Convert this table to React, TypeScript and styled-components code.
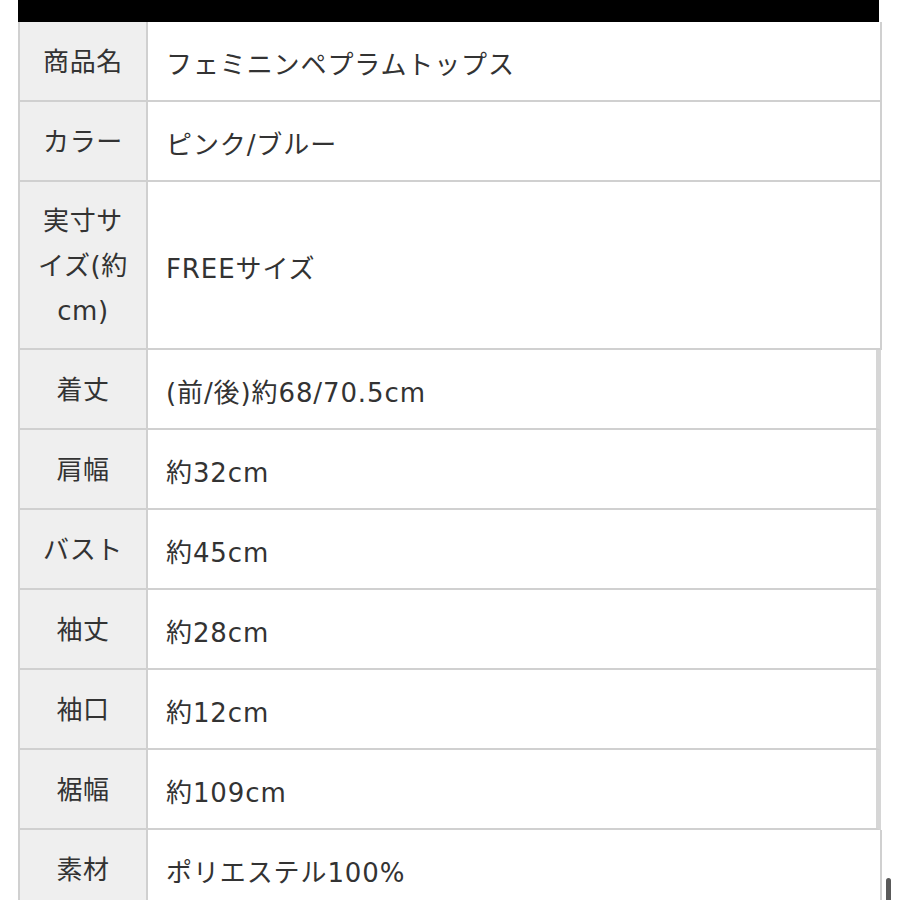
import React from "react";
import styled, { createGlobalStyle } from "styled-components";

const Global = createGlobalStyle`
  html, body { margin: 0; padding: 0; background: #ffffff; }
  body { overflow: hidden; }
`;

const Page = styled.div`
  position: relative;
  width: 900px;
  height: 900px;
  overflow: hidden;
  background: #fff;
  padding-left: 18px;
  box-sizing: border-box;
  font-family: "DejaVu Sans", "Noto Sans CJK JP", sans-serif;
  color: #333333;
`;

const Wrap = styled.div`
  width: 864px;
`;

const TopBar = styled.div`
  height: 22px;
  width: 861px;
  background: #000;
`;

const Table = styled.div`
  display: flex;
  flex-direction: column;
`;

const Row = styled.div<{ $h: number; $thick?: boolean }>`
  display: grid;
  grid-template-columns: 128px 1fr;
  height: ${(p) => p.$h}px;
  border-left: 2px solid #d0d0d0;
  border-bottom: 2px solid #d0d0d0;
  border-right: ${(p) => (p.$thick ? "5px solid #d6d6d6" : "2px solid #d0d0d0")};
  width: ${(p) => (p.$thick ? "863px" : "864px")};
  box-sizing: border-box;
`;

const Label = styled.div`
  background: #efefef;
  border-right: 2px solid #d0d0d0;
  display: flex;
  align-items: center;
  justify-content: center;
  text-align: center;
  padding: 2px 14px 0;
  font-size: 26px;
  line-height: 45px;
  letter-spacing: 0.6px;
  word-break: break-all;
`;

const Value = styled.div`
  display: flex;
  align-items: center;
  padding: 2px 0 0 18px;
  font-size: 26px;
  letter-spacing: 0.9px;
  background: #fff;
`;

const Thumb = styled.div`
  position: absolute;
  left: 886px;
  top: 878px;
  width: 5px;
  height: 30px;
  border-radius: 3px;
  background: #5a5a5a;
`;

const rows: { label: string; value: string; h: number; thick?: boolean }[] = [
  { label: "商品名", value: "フェミニンペプラムトップス", h: 80 },
  { label: "カラー", value: "ピンク/ブルー", h: 80 },
  { label: "実寸サイズ(約cm)", value: "FREEサイズ", h: 168 },
  { label: "着丈", value: "(前/後)約68/70.5cm", h: 80, thick: true },
  { label: "肩幅", value: "約32cm", h: 80, thick: true },
  { label: "バスト", value: "約45cm", h: 80, thick: true },
  { label: "袖丈", value: "約28cm", h: 80, thick: true },
  { label: "袖口", value: "約12cm", h: 80, thick: true },
  { label: "裾幅", value: "約109cm", h: 80, thick: true },
  { label: "素材", value: "ポリエステル100%", h: 80 },
];

export default function App() {
  return (
    <Page>
      <Global />
      <Wrap>
        <TopBar />
        <Table>
          {rows.map((r) => (
            <Row key={r.label} $h={r.h} $thick={r.thick}>
              <Label>{r.label}</Label>
              <Value>{r.value}</Value>
            </Row>
          ))}
        </Table>
      </Wrap>
      <Thumb />
    </Page>
  );
}
